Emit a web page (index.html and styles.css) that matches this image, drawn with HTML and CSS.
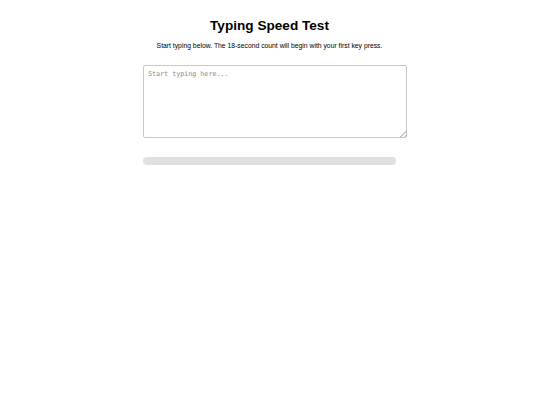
FILE: index.html
```html
<!DOCTYPE html>
<html lang="en">
<head>
<meta charset="utf-8">
<title>Typing Speed Test</title>
<link rel="stylesheet" href="styles.css">
</head>
<body>
<main class="container">
  <h1 class="title">Typing Speed Test</h1>
  <p class="intro">Start typing below. The 18-second count will begin with your first key press.</p>
  <textarea class="input" placeholder="Start typing here..."></textarea>
  <div class="progress"><div class="progress-fill"></div></div>
</main>
</body>
</html>
```

FILE: styles.css
```css
html, body {
  margin: 0;
  padding: 0;
  background: #fff;
}
body {
  font-family: "Liberation Sans", Arial, sans-serif;
  color: #000;
}
.container {
  width: 253px;
  padding-right: 1px;
  margin: 0 auto;
  padding-top: 18px;
  display: flex;
  flex-direction: column;
  align-items: stretch;
}
.title {
  margin: 0;
  font-size: 13.6px;
  line-height: 16px;
  font-weight: bold;
  text-align: center;
}
.intro {
  margin: 8px -20px 0;
  font-size: 6.8px;
  line-height: 8px;
  text-align: center;
}
.input {
  box-sizing: border-box;
  width: 264px;
  height: 73px;
  margin-top: 15px;
  padding: 4px 4px;
  border: 1px solid #c8c8c8;
  border-radius: 2px;
  font-family: "DejaVu Sans Mono", monospace;
  font-size: 6.7px;
  line-height: 9px;
  resize: vertical;
  outline: none;
}
.input::placeholder {
  color: #888;
}
.input::-webkit-resizer {
  background: linear-gradient(135deg, transparent 78%, #c8c8c8 78%, #c8c8c8 84%, transparent 84%, transparent 90%, #c8c8c8 90%);
}
.progress {
  margin-top: 19px;
  height: 8px;
  border-radius: 4px;
  background: #e0e0e0;
  overflow: hidden;
}
.progress-fill {
  width: 0;
  height: 100%;
  background: #4caf50;
}
```
